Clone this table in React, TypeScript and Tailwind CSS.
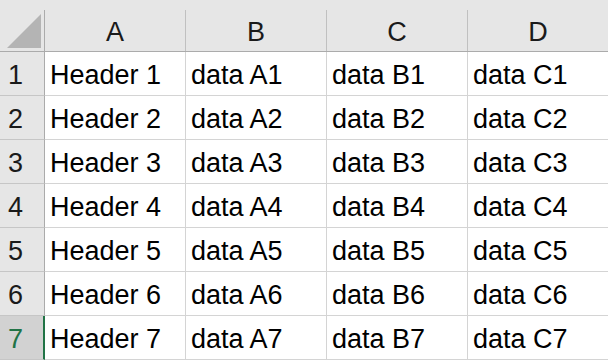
import React from "react";

const columns = ["A", "B", "C", "D"];

const rows = [1, 2, 3, 4, 5, 6, 7].map((n) => ({
  n,
  cells: [`Header ${n}`, `data A${n}`, `data B${n}`, `data C${n}`],
}));

const activeRow = 7;

const ColumnHeader = ({ label }: { label: string }) => (
  <div className="flex w-[141px] shrink-0 border-b border-[#ababab] bg-[#e6e6e6]">
    <div className="flex flex-1 items-end justify-center pb-[3px] leading-[31px]">{label}</div>
    <div className="mt-[10px] w-px bg-[#c0c0c0]" />
  </div>
);

const App = () => {
  return (
    <div
      className="h-[361px] w-[608px] overflow-hidden bg-white text-[27px] text-[#1a1a1a]"
      style={{ fontFamily: '"Liberation Sans", Arial, sans-serif' }}
    >
      <div className="flex h-[52px]">
        <div className="flex w-[45px] shrink-0 border-b border-[#ababab] bg-[#e6e6e6]">
          <div className="flex flex-1 items-start pl-[7px] pt-[14px]">
            <svg width="34" height="34" viewBox="0 0 34 34">
              <polygon points="34,0 34,34 0,34" fill="#b4b4b4" />
            </svg>
          </div>
          <div className="mt-[10px] w-px bg-[#ababab]" />
        </div>
        {columns.map((c) => (
          <ColumnHeader key={c} label={c} />
        ))}
      </div>

      {rows.map((row) => {
        const active = row.n === activeRow;
        return (
          <div key={row.n} className="flex h-[44px]">
            <div
              className={
                active
                  ? "flex w-[45px] shrink-0 items-end border-b border-r-2 border-b-[#c6c6c6] border-r-[#217346] bg-[#d2d2d2] pb-[4px] pl-[8px] leading-[31px] text-[#217346]"
                  : "flex w-[45px] shrink-0 items-end border-b border-r border-b-[#c6c6c6] border-r-[#ababab] bg-[#e6e6e6] pb-[4px] pl-[8px] leading-[31px]"
              }
            >
              {row.n}
            </div>
            {row.cells.map((cell, i) => (
              <div
                key={i}
                className="flex w-[141px] shrink-0 items-end whitespace-nowrap border-b border-r border-[#d4d4d4] pb-[4px] pl-[5px] leading-[31px] text-black"
              >
                {cell}
              </div>
            ))}
          </div>
        );
      })}
    </div>
  );
};

export default App;
